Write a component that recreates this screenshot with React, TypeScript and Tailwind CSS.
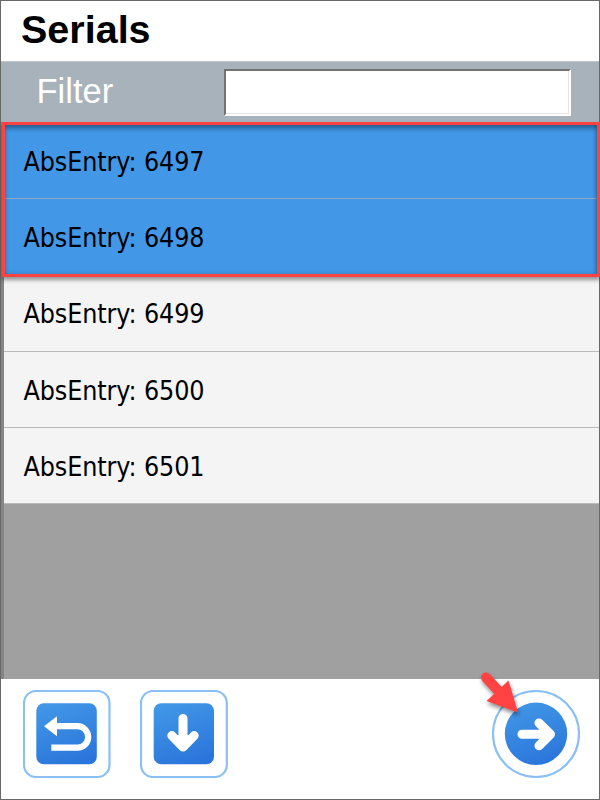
import React from "react";

const entries = [
  { id: 6497, selected: true },
  { id: 6498, selected: true },
  { id: 6499, selected: false },
  { id: 6500, selected: false },
  { id: 6501, selected: false },
];

function Header() {
  return (
    <header className="h-[60px] shrink-0 bg-white pl-5">
      <h1 className="text-[39.5px] leading-[57px] font-bold text-black">Serials</h1>
    </header>
  );
}

function FilterBar() {
  return (
    <div className="flex h-[61px] shrink-0 items-start border-t border-[#bcc4ca] bg-[#a8b2ba]">
      <label htmlFor="filter" className="w-[223px] pl-[35.5px] text-[34.5px] leading-[58px] text-white">
        Filter
      </label>
      <input
        id="filter"
        className="mt-[7px] h-[47px] w-[347px] border-2 border-t-[#707274] border-r-white border-b-white border-l-[#707274] bg-white shadow-[inset_-1px_-1px_0_#e6e6e6] outline-none"
      />
    </div>
  );
}

function EntryRow({ id, selected }: { id: number; selected: boolean }) {
  return (
    <li
      className={
        selected
          ? "h-[76.2px] border-b border-[#8fa9c4] bg-[#4297e7] pl-[19.5px]"
          : "h-[76.2px] border-b border-[#bababa] bg-[#f4f4f4] pl-[19.5px]"
      }
    >
      <span className="inline-block text-[26.6px] leading-[77px] tracking-[-0.1px] whitespace-nowrap text-black [font-family:'DejaVu_Sans_Condensed','DejaVu_Sans',sans-serif] [font-stretch:condensed]">
        AbsEntry: {id}
      </span>
    </li>
  );
}

function Gradient({ id }: { id: string }) {
  return (
    <defs>
      <linearGradient id={id} x1="0.3" y1="0" x2="0.65" y2="1">
        <stop offset="0" stopColor="#4196e6" />
        <stop offset="1" stopColor="#2a75db" />
      </linearGradient>
    </defs>
  );
}

function BackIcon() {
  return (
    <svg width="88" height="88" viewBox="0 0 88 88">
      <Gradient id="back" />
      <rect x="1" y="1" width="85.5" height="86" rx="12" fill="white" stroke="#8ac0f3" strokeWidth="2.2" />
      <rect x="13.3" y="13.3" width="60.5" height="61" rx="7.5" fill="url(#back)" />
      <path d="M21 36.2 34 26.2V46.2Z" fill="white" />
      <path d="M32 36.2H54.5A10.7 10.7 0 0 1 54.5 57.6H28.3" fill="none" stroke="white" strokeWidth="6.2" />
    </svg>
  );
}

function DownIcon() {
  return (
    <svg width="88" height="88" viewBox="0 0 88 88">
      <Gradient id="down" />
      <rect x="1" y="1" width="85.8" height="86" rx="12" fill="white" stroke="#8ac0f3" strokeWidth="2.2" />
      <rect x="13.7" y="13.3" width="60.3" height="61" rx="7.5" fill="url(#down)" />
      <path d="M43 28.5V55M31.8 45.6 43 57 54.2 45.6" fill="none" stroke="white" strokeWidth="9" strokeLinecap="round" strokeLinejoin="round" />
      <path d="M35 45H51L43 54Z" fill="white" />
    </svg>
  );
}

function NextIcon() {
  return (
    <svg width="88" height="88" viewBox="0 0 88 88">
      <Gradient id="next" />
      <circle cx="44" cy="44" r="43" fill="white" stroke="#8ac0f3" strokeWidth="2.2" />
      <circle cx="44" cy="43.8" r="31.2" fill="url(#next)" />
      <path d="M30 44.3H57M47 33 58.5 44.3 47 55.8" fill="none" stroke="white" strokeWidth="9" strokeLinecap="round" strokeLinejoin="round" />
      <path d="M47 36V52L55 44Z" fill="white" />
    </svg>
  );
}

function Pointer() {
  return (
    <svg
      className="pointer-events-none absolute -top-[20px] -left-[14px] drop-shadow-[1px_3px_2px_rgba(0,0,0,0.45)]"
      width="44"
      height="46"
      viewBox="0 0 44 46"
    >
      <path d="M8 7.5 22 22.5" stroke="#ff4242" strokeWidth="10" strokeLinecap="round" />
      <path d="M30.5 10.5 40 42.5 8.5 31Z" fill="#ff4242" />
    </svg>
  );
}

export default function App() {
  return (
    <main className="flex h-[800px] w-[600px] flex-col border border-[#686868] bg-white [font-family:'Liberation_Sans',Arial,sans-serif]">
      <Header />
      <FilterBar />
      <section className="relative h-[557px] shrink-0 border-t border-l-3 border-t-[#3272ae] border-l-[#858585] bg-[#a0a0a0]">
        <ul>
          {entries.map((entry) => (
            <EntryRow key={entry.id} id={entry.id} selected={entry.selected} />
          ))}
        </ul>
        <div className="pointer-events-none absolute -top-px -right-px -left-[2px] h-[155px] border-3 border-[#ff4242] shadow-[0_3px_4px_rgba(0,0,0,0.4),inset_0_4px_4px_rgba(0,0,0,0.3),inset_-1px_0_4px_rgba(0,0,0,0.2)]" />
      </section>
      <footer className="flex flex-1 items-start bg-white pt-[11px] pl-[22px]">
        <button aria-label="Back">
          <BackIcon />
        </button>
        <button aria-label="Down" className="ml-[29px]">
          <DownIcon />
        </button>
        <button aria-label="Next" className="relative ml-[264px]">
          <NextIcon />
          <Pointer />
        </button>
      </footer>
    </main>
  );
}
